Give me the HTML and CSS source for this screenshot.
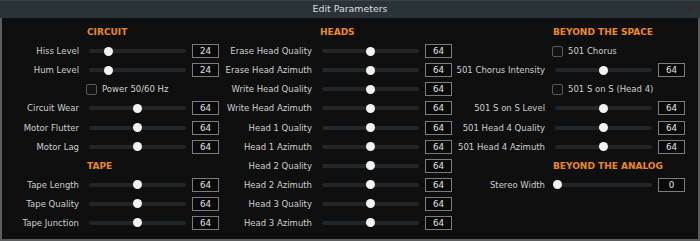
FILE: index.html
```html
<!DOCTYPE html>
<html>
<head>
<meta charset="utf-8">
<link rel="stylesheet" href="styles.css">
</head>
<body>
<div class="window">
  <div class="titlebar">
    <span class="title">Edit Parameters</span>
    <svg class="close" width="8" height="8" viewBox="0 0 8 8"><path d="M1 1L7 7M7 1L1 7" stroke="#3e2628" stroke-width="1.3"/></svg>
  </div>
  <div class="content">
    <div class="panel p1">
      <div class="row head"><span class="hdr">CIRCUIT</span></div>
      <div class="row"><span class="lbl">Hiss Level</span><div class="slider" style="--v:0.189"><i></i></div><span class="val">24</span></div>
      <div class="row"><span class="lbl">Hum Level</span><div class="slider" style="--v:0.189"><i></i></div><span class="val">24</span></div>
      <div class="row chk"><span class="box"></span><span class="ctext">Power 50/60 Hz</span></div>
      <div class="row"><span class="lbl">Circuit Wear</span><div class="slider" style="--v:0.504"><i></i></div><span class="val">64</span></div>
      <div class="row"><span class="lbl">Motor Flutter</span><div class="slider" style="--v:0.504"><i></i></div><span class="val">64</span></div>
      <div class="row"><span class="lbl">Motor Lag</span><div class="slider" style="--v:0.504"><i></i></div><span class="val">64</span></div>
      <div class="row head"><span class="hdr">TAPE</span></div>
      <div class="row"><span class="lbl">Tape Length</span><div class="slider" style="--v:0.504"><i></i></div><span class="val">64</span></div>
      <div class="row"><span class="lbl">Tape Quality</span><div class="slider" style="--v:0.504"><i></i></div><span class="val">64</span></div>
      <div class="row"><span class="lbl">Tape Junction</span><div class="slider" style="--v:0.504"><i></i></div><span class="val">64</span></div>
    </div>
    <div class="panel p2">
      <div class="row head"><span class="hdr">HEADS</span></div>
      <div class="row"><span class="lbl">Erase Head Quality</span><div class="slider" style="--v:0.504"><i></i></div><span class="val">64</span></div>
      <div class="row"><span class="lbl">Erase Head Azimuth</span><div class="slider" style="--v:0.504"><i></i></div><span class="val">64</span></div>
      <div class="row"><span class="lbl">Write Head Quality</span><div class="slider" style="--v:0.504"><i></i></div><span class="val">64</span></div>
      <div class="row"><span class="lbl">Write Head Azimuth</span><div class="slider" style="--v:0.504"><i></i></div><span class="val">64</span></div>
      <div class="row"><span class="lbl">Head 1 Quality</span><div class="slider" style="--v:0.504"><i></i></div><span class="val">64</span></div>
      <div class="row"><span class="lbl">Head 1 Azimuth</span><div class="slider" style="--v:0.504"><i></i></div><span class="val">64</span></div>
      <div class="row"><span class="lbl">Head 2 Quality</span><div class="slider" style="--v:0.504"><i></i></div><span class="val">64</span></div>
      <div class="row"><span class="lbl">Head 2 Azimuth</span><div class="slider" style="--v:0.504"><i></i></div><span class="val">64</span></div>
      <div class="row"><span class="lbl">Head 3 Quality</span><div class="slider" style="--v:0.504"><i></i></div><span class="val">64</span></div>
      <div class="row"><span class="lbl">Head 3 Azimuth</span><div class="slider" style="--v:0.504"><i></i></div><span class="val">64</span></div>
    </div>
    <div class="panel p3">
      <div class="row head"><span class="hdr">BEYOND THE SPACE</span></div>
      <div class="row chk"><span class="box"></span><span class="ctext">501 Chorus</span></div>
      <div class="row"><span class="lbl">501 Chorus Intensity</span><div class="slider" style="--v:0.504"><i></i></div><span class="val">64</span></div>
      <div class="row chk"><span class="box"></span><span class="ctext">501 S on S (Head 4)</span></div>
      <div class="row"><span class="lbl">501 S on S Level</span><div class="slider" style="--v:0.504"><i></i></div><span class="val">64</span></div>
      <div class="row"><span class="lbl">501 Head 4 Quality</span><div class="slider" style="--v:0.504"><i></i></div><span class="val">64</span></div>
      <div class="row"><span class="lbl">501 Head 4 Azimuth</span><div class="slider" style="--v:0.504"><i></i></div><span class="val">64</span></div>
      <div class="row head"><span class="hdr">BEYOND THE ANALOG</span></div>
      <div class="row"><span class="lbl">Stereo Width</span><div class="slider" style="--v:0"><i></i></div><span class="val">0</span></div>
    </div>
  </div>
</div>
</body>
</html>
```

FILE: styles.css
```css
* { box-sizing: border-box; }
html, body {
  margin: 0;
  padding: 0;
  background: #0f0f0f;
}
body {
  width: 700px;
  height: 241px;
  overflow: hidden;
  font-family: "DejaVu Sans", "Liberation Sans", sans-serif;
}
.window {
  width: 700px;
  height: 241px;
  border: 2px solid #5b5d5e;
  border-top: none;
  background: #0f0f0f;
  display: flex;
  flex-direction: column;
}
.titlebar {
  height: 18px;
  margin: 0 -2px;
  background: #2a3338;
  border-top: 1px solid #3a4349;
  display: flex;
  align-items: center;
  justify-content: center;
  position: relative;
}
.title {
  color: #dcdfe0;
  font-size: 9.4px;
  line-height: 1;
  margin-top: -1px;
}
.close {
  position: absolute;
  right: 6px;
  top: 4px;
}
.content {
  display: flex;
  padding-top: 4.5px;
}
.panel {
  display: flex;
  flex-direction: column;
}
.p1 { --lw: 77px; }
.p2 { --lw: 93px; }
.p3 { --lw: 93px; }
.row {
  height: 19.1px;
  display: flex;
  align-items: center;
}
.lbl {
  width: var(--lw);
  text-align: right;
  color: #cdd0d1;
  font-size: 8.5px;
  white-space: nowrap;
}
.slider {
  width: 97px;
  height: 4px;
  margin: 0 6px 0 10px;
  border-radius: 2px;
  background: #20262a;
  position: relative;
}
.slider i {
  position: absolute;
  top: -2.5px;
  width: 9px;
  height: 9px;
  border-radius: 50%;
  background: #f2f2f2;
  left: calc(2px - 4.5px + var(--v) * (100% - 4px));
}
.val {
  width: 27px;
  height: 14px;
  border: 1px solid #7a7c7d;
  background: #0a0a0a;
  color: #e2e2e2;
  font-size: 8.7px;
  display: flex;
  align-items: center;
  justify-content: center;
}
.head .hdr {
  margin-left: calc(var(--lw) + 8px);
  color: #ea8a14;
  font-weight: bold;
  font-size: 9px;
  white-space: nowrap;
}
.chk .box {
  margin-left: calc(var(--lw) + 7px);
  width: 11px;
  height: 11px;
  border: 1px solid #56595b;
  border-radius: 2px;
  background: #121212;
}
.chk .ctext {
  margin-left: 5px;
  color: #cdd0d1;
  font-size: 8.5px;
  white-space: nowrap;
}
```
